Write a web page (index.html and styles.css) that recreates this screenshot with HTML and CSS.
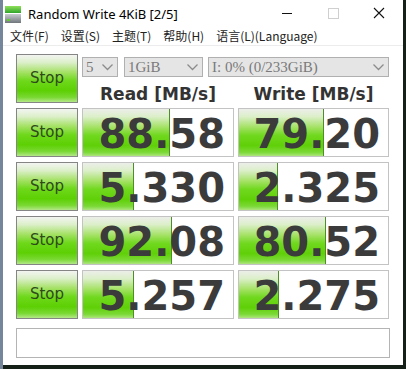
FILE: index.html
```html
<!DOCTYPE html>
<html>
<head>
  <link rel="stylesheet" href="styles.css">
</head>
<body>
  <div class="window">
    <div class="titlebar">
      <svg class="app-icon" width="16" height="17" viewBox="0 0 16 17">
        <defs>
          <linearGradient id="ig" x1="0" y1="0" x2="0" y2="1">
            <stop offset="0" stop-color="#8fe05a"/>
            <stop offset="1" stop-color="#2fa52a"/>
          </linearGradient>
          <linearGradient id="gg" x1="0" y1="0" x2="0" y2="1">
            <stop offset="0" stop-color="#c9cdd1"/>
            <stop offset="1" stop-color="#6f767c"/>
          </linearGradient>
        </defs>
        <rect x="0" y="0" width="16" height="7" fill="url(#ig)"/>
        <rect x="0" y="8" width="16" height="9" fill="url(#gg)"/>
        <rect x="2" y="13" width="3" height="2" fill="#5fd12a"/>
      </svg>
      <span class="title">Random Write 4KiB [2/5]</span>
      <div class="controls">
        <svg width="46" height="27" viewBox="0 0 46 27"><line x1="18" y1="13.5" x2="28" y2="13.5" stroke="#111" stroke-width="1"/></svg>
        <svg width="46" height="27" viewBox="0 0 46 27"><rect x="18.5" y="8.5" width="10" height="10" fill="none" stroke="#cfcfcf" stroke-width="1"/></svg>
        <svg width="46" height="27" viewBox="0 0 46 27"><path d="M18 8 L28 18 M28 8 L18 18" stroke="#111" stroke-width="1.1" fill="none"/></svg>
      </div>
    </div>
    <div class="menubar">
      <span>文件(F)</span>
      <span>设置(S)</span>
      <span>主题(T)</span>
      <span>帮助(H)</span>
      <span>语言(L)(Language)</span>
    </div>

    <div class="client">
      <div class="board">
        <div class="stop">Stop</div>
        <div class="top-area">
          <div class="selects">
            <div class="dropdown count">5<svg class="chev" width="11" height="7" viewBox="0 0 11 7"><path d="M0.5 0.5 L5.5 5.5 L10.5 0.5" fill="none" stroke="#8c8c8c" stroke-width="1.3"/></svg></div>
            <div class="dropdown size">1GiB<svg class="chev" width="11" height="7" viewBox="0 0 11 7"><path d="M0.5 0.5 L5.5 5.5 L10.5 0.5" fill="none" stroke="#8c8c8c" stroke-width="1.3"/></svg></div>
            <div class="dropdown drive">I: 0% (0/233GiB)<svg class="chev" width="11" height="7" viewBox="0 0 11 7"><path d="M0.5 0.5 L5.5 5.5 L10.5 0.5" fill="none" stroke="#8c8c8c" stroke-width="1.3"/></svg></div>
          </div>
          <div class="headers">
            <div class="head">Read [MB/s]</div>
            <div class="head">Write [MB/s]</div>
          </div>
        </div>

        <div class="stop">Stop</div>
        <div class="score"><div class="bar" style="width: 58%"></div><span>88.58</span></div>
        <div class="score"><div class="bar" style="width: 57%"></div><span>79.20</span></div>

        <div class="stop">Stop</div>
        <div class="score"><div class="bar" style="width: 34%"></div><span>5.330</span></div>
        <div class="score"><div class="bar" style="width: 26.5%"></div><span>2.325</span></div>

        <div class="stop">Stop</div>
        <div class="score"><div class="bar" style="width: 59%"></div><span>92.08</span></div>
        <div class="score"><div class="bar" style="width: 58.5%"></div><span>80.52</span></div>

        <div class="stop">Stop</div>
        <div class="score"><div class="bar" style="width: 34%"></div><span>5.257</span></div>
        <div class="score"><div class="bar" style="width: 27%"></div><span>2.275</span></div>
      </div>
      <div class="comment"></div>
    </div>
  </div>
</body>
</html>
```

FILE: styles.css
```css
body {
  margin: 0;
  height: 369px;
  overflow: hidden;
  background: linear-gradient(90deg, #76869a 0, #76869a 3px, #152019 3px);
}
.window {
  margin-left: 3px;
  width: 400px;
  height: 365px;
  background-color: #fff;
}
.titlebar {
  height: 27px;
  display: flex;
  align-items: center;
  font-family: "Noto Sans", sans-serif;
  font-size: 13px;
  color: #000;
}
.app-icon {
  margin-left: 2px;
  margin-top: 1px;
}
.title {
  margin-left: 7px;
}
.controls {
  margin-left: auto;
  display: flex;
  margin-right: 1px;
}
.menubar {
  height: 18px;
  line-height: 18px;
  display: flex;
  gap: 12px;
  padding-left: 7px;
  border-bottom: 1px solid #ececec;
  font-family: "Noto Sans CJK SC", sans-serif;
  font-size: 12px;
  color: #222;
}
.client {
  padding: 8px 11px 0 13px;
}
.board {
  display: grid;
  grid-template-columns: 62px 152px 151px;
  grid-auto-rows: 49px;
  column-gap: 4px;
  row-gap: 5px;
}
.stop {
  box-sizing: border-box;
  border: 1px solid #858585;
  background: linear-gradient(#f3f5f1 0%, #dcefca 16%, #a6e268 36%, #6ed81a 55%, #5dd004 76%, #79d832 90%, #b3e887 100%);
  font-family: "DejaVu Sans", sans-serif;
  font-size: 15px;
  color: #2e4a1c;
  text-align: center;
  line-height: 47px;
}
.top-area {
  grid-column: 2 / 4;
  padding-top: 3px;
}
.selects {
  display: flex;
  height: 20px;
}
.dropdown {
  box-sizing: border-box;
  height: 20px;
  border: 1px solid #b0b0b0;
  background-color: #e5e5e5;
  font-family: "Liberation Serif", serif;
  font-size: 15px;
  line-height: 18px;
  color: #7a7a7a;
  padding-left: 3px;
  display: flex;
  align-items: center;
}
.chev {
  margin-left: auto;
  margin-right: 4px;
}
.count {
  width: 36px;
}
.size {
  width: 79px;
  margin-left: 6px;
}
.drive {
  width: 181px;
  margin-left: 5px;
}
.headers {
  display: grid;
  grid-template-columns: 152px 151px;
  column-gap: 4px;
  margin-top: 7px;
}
.head {
  text-align: center;
  font-family: "DejaVu Sans", sans-serif;
  font-weight: bold;
  font-size: 17px;
  line-height: 20px;
  color: #333;
}
.score {
  position: relative;
  box-sizing: border-box;
  border: 1px solid #c3c3c3;
  background-color: #fff;
  text-align: right;
  padding-right: 8px;
  font-family: "DejaVu Sans", sans-serif;
  font-weight: bold;
  font-size: 40px;
  line-height: 50px;
  color: #3b3b3b;
  overflow: hidden;
}
.score span {
  position: relative;
}
.bar {
  position: absolute;
  left: 0;
  top: 0;
  bottom: 0;
  box-sizing: border-box;
  border-right: 1px solid #4d8f26;
  background: linear-gradient(#eceee9 0%, #dcefca 16%, #a6e268 38%, #70d81e 56%, #60d008 78%, #7bd936 92%, #aee57f 100%);
}
.comment {
  margin-top: 9px;
  height: 30px;
  width: 374px;
  box-sizing: border-box;
  border: 1px solid #b4b4b4;
  background-color: #fff;
}
```
